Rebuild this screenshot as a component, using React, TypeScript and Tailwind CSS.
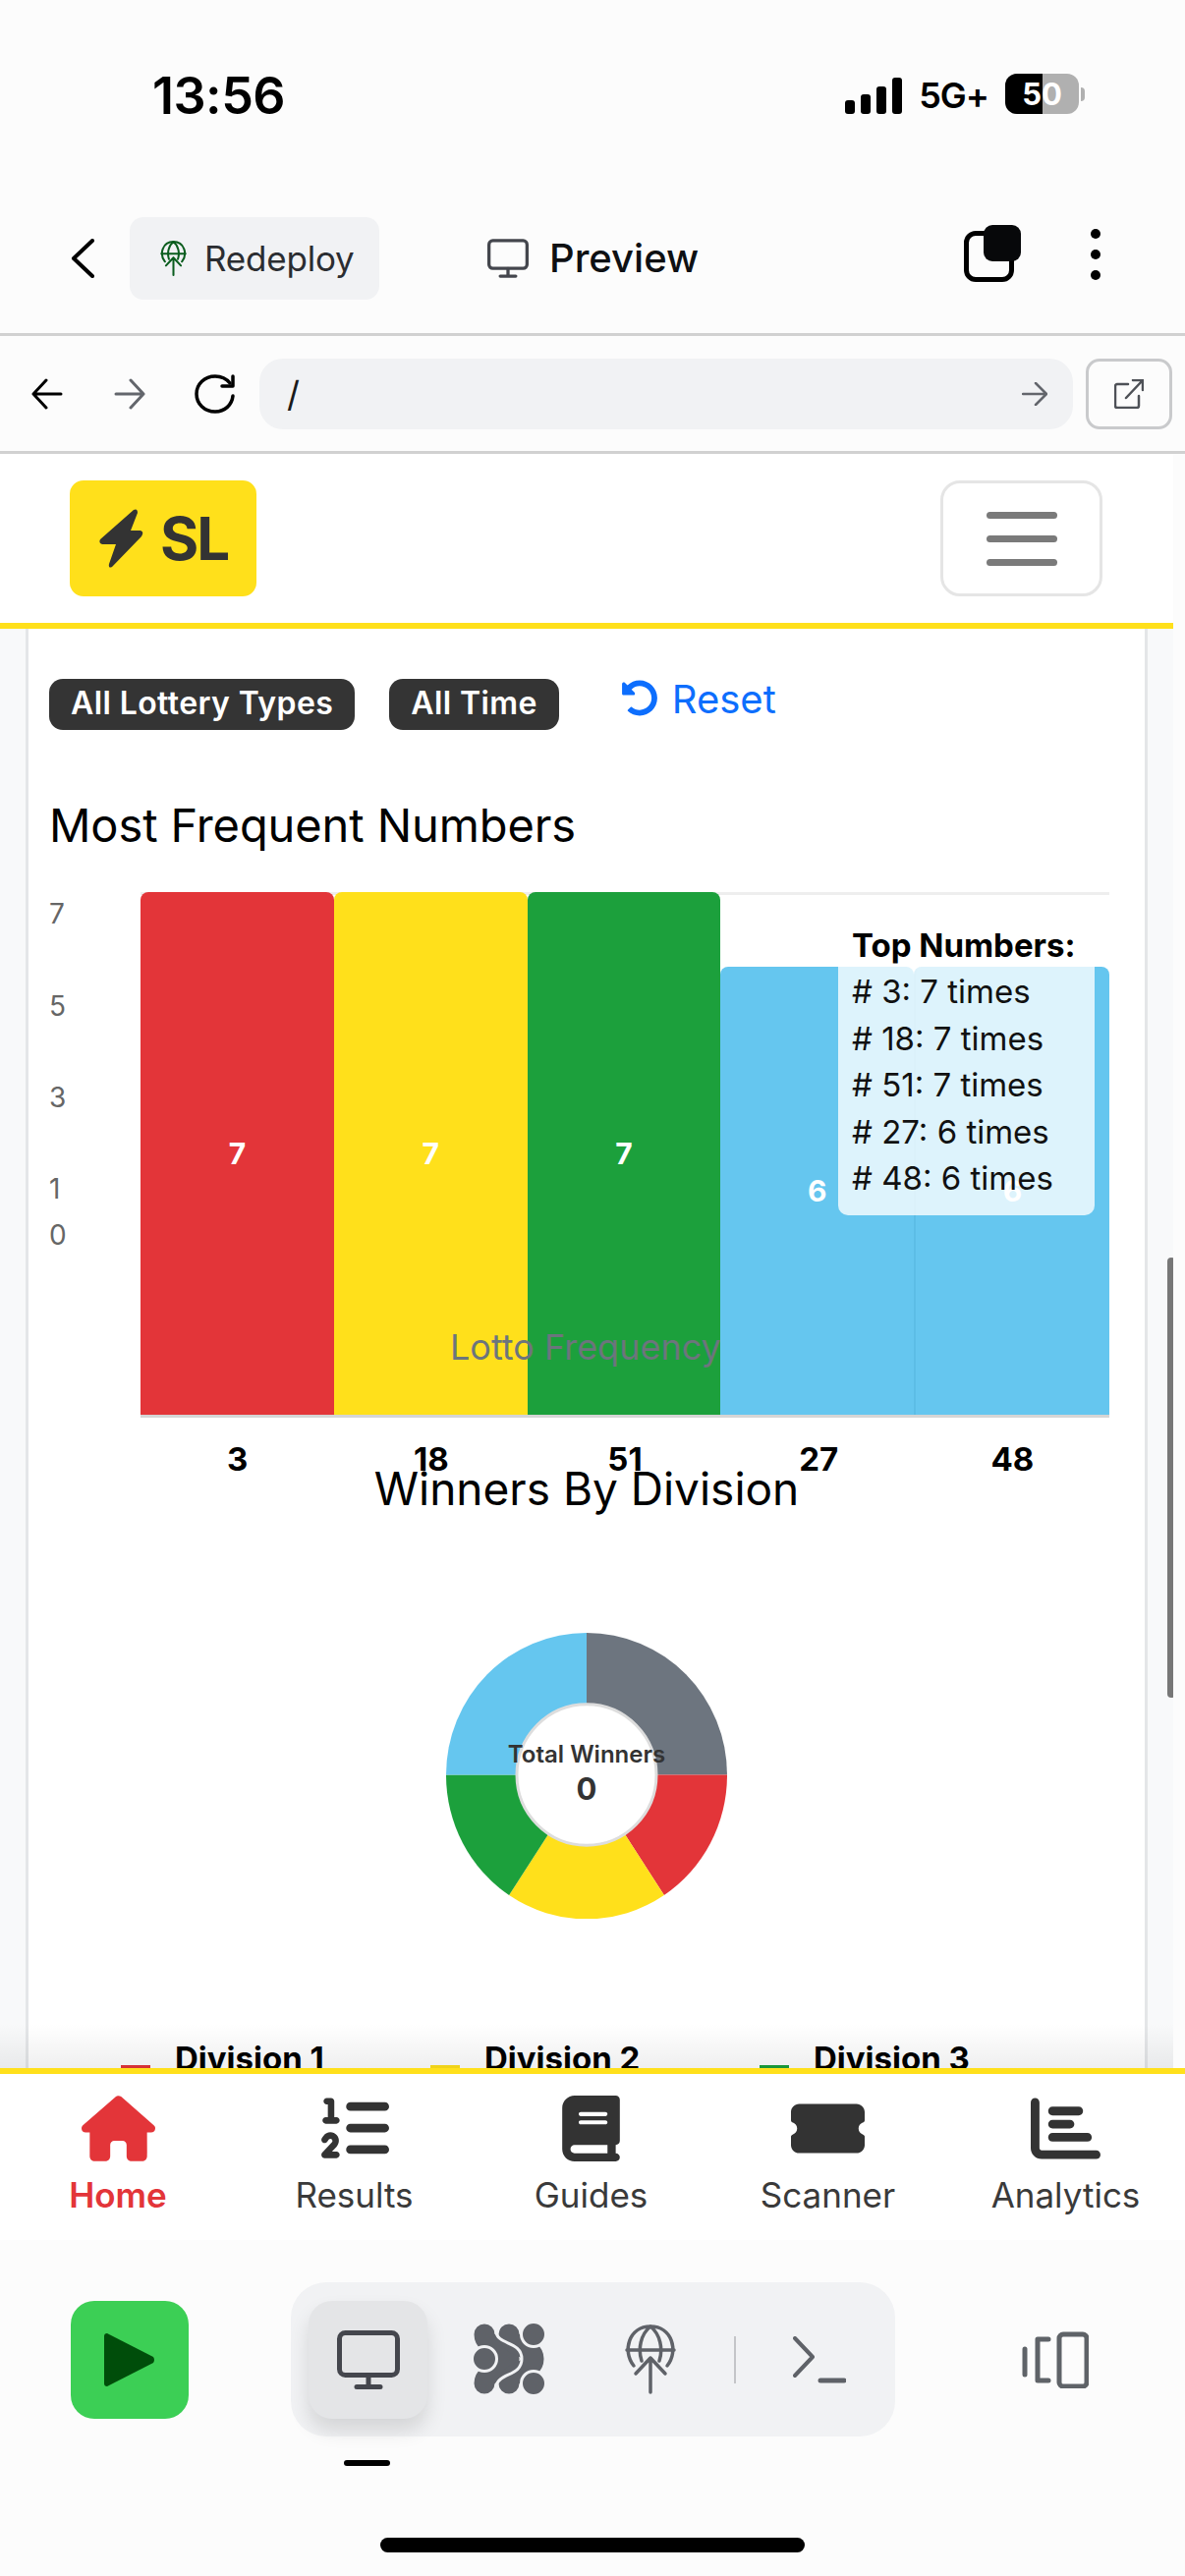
import React from 'react';
import { FaHouse, FaListOl, FaBook, FaTicketSimple, FaChartBar } from 'react-icons/fa6';
import { FaUndoAlt } from 'react-icons/fa';

const DeployIcon = ({ className, sw = 4 }: { className: string; sw?: number }) => (
    <svg viewBox="0 0 52 71" fill="none" stroke="currentColor" strokeWidth={sw} strokeLinecap="round" strokeLinejoin="round" className={className}>
        <path d="M9 42C-3 27 4 2 26 2C48 2 55 27 43 42" />
        <path d="M17 37C13 25 16 10 26 2C36 10 39 25 35 37" />
        <path d="M2 26H50" />
        <path d="M26 69V34M11 50L26 34L41 50" />
    </svg>
);

const MonitorIcon = ({ className, sw = 5 }: { className: string; sw?: number }) => (
    <svg viewBox="0 0 64 60" fill="none" stroke="currentColor" strokeWidth={sw} strokeLinecap="round" className={className}>
        <rect x="2.5" y="2.5" width="59" height="43" rx="6" />
        <path d="M32 46V57M20 57.5H44" />
    </svg>
);

const AgentIcon = ({ className }: { className: string }) => (
    <svg viewBox="0 0 73 73" fill="none" className={className}>
        <g stroke="currentColor" strokeWidth="21" strokeLinecap="round">
            <path d="M11 11C11 25 36 22 36 36C36 50 11 47 11 61" />
            <path d="M36 11C36 25 61 22 61 36C61 50 36 47 36 61" />
        </g>
        <path d="M23 9C25 22 49 18 49 36C49 54 25 50 23 64" stroke="#f1f2f4" strokeWidth="3" />
        <circle cx="11" cy="36" r="12.5" fill="currentColor" stroke="#f1f2f4" strokeWidth="3" />
        <circle cx="61" cy="11" r="12.5" fill="currentColor" stroke="#f1f2f4" strokeWidth="3" />
        <circle cx="61" cy="61" r="12.5" fill="currentColor" stroke="#f1f2f4" strokeWidth="3" />
    </svg>
);

export default function App() {
    return (
        <div className="relative w-[1206px] h-[2622px] overflow-hidden bg-[#fcfcfc] flex flex-col font-['Inter',sans-serif] text-black">
            {/* status bar */}
            <div className="h-[196px] shrink-0 flex justify-between pl-[155px] pr-[102px] pt-[68px]">
                <span className="text-[52px] leading-[60px] font-semibold tracking-[-0.5px]">13:56</span>
                <div className="flex items-start gap-[17px] pt-[9px]">
                    <div className="flex items-end gap-[6px] h-[37px] mt-[2px]">
                        <div className="w-[10px] h-[14px] rounded-[3px] bg-black" />
                        <div className="w-[10px] h-[20px] rounded-[3px] bg-black" />
                        <div className="w-[10px] h-[28px] rounded-[3px] bg-black" />
                        <div className="w-[10px] h-[37px] rounded-[3px] bg-black" />
                    </div>
                    <span className="text-[36px] leading-[40px] font-semibold tracking-[-1px]">5G+</span>
                    <div className="flex items-center gap-[2px] -mt-[2px]">
                        <div className="relative w-[75px] h-[41px] rounded-[12px] overflow-hidden bg-[#b0b0b0] flex">
                            <div className="w-[38px] h-full bg-black" />
                            <span className="absolute inset-0 text-center text-white text-[31px] leading-[41px] font-bold">50</span>
                        </div>
                        <div className="w-[4px] h-[14px] rounded-r-full bg-[#b0b0b0]" />
                    </div>
                </div>
            </div>

            {/* replit toolbar */}
            <div className="h-[146px] shrink-0 flex items-start pt-[25px] relative border-b-[3px] border-[#d1d1d1]">
                <svg viewBox="0 0 24 40" fill="none" stroke="black" strokeWidth="4" strokeLinecap="round" strokeLinejoin="round" className="w-[24px] h-[40px] ml-[72px] mt-[22px]">
                    <path d="M22 2L3 20L22 38" />
                </svg>
                <div className="ml-[36px] w-[254px] h-[84px] rounded-[14px] bg-[#f1f2f4] flex items-center pl-[31px] gap-[18px]">
                    <DeployIcon sw={4} className="w-[27px] h-[36px] text-[#0b5d1e]" />
                    <span className="text-[35px] leading-[44px] text-[#2b2d31] tracking-[-0.2px]">Redeploy</span>
                </div>
                <div className="ml-[110px] flex items-center gap-[21px] h-[84px]">
                    <MonitorIcon sw={5} className="w-[42px] h-[40px] text-[#44464d]" />
                    <span className="text-[40px] leading-[48px] font-medium text-[#0e1013]">Preview</span>
                </div>
                <div className="relative ml-[270px] mt-[8px] w-[58px] h-[58px]">
                    <div className="absolute left-0 bottom-0 w-[51px] h-[52px] rounded-[12px] border-[5px] border-black" />
                    <div className="absolute right-0 top-0 w-[38px] h-[37px] rounded-[9px] bg-[#07080a]" />
                </div>
                <div className="ml-[71px] mt-[12px] flex flex-col gap-[11px]">
                    <div className="w-[10px] h-[10px] rounded-full bg-black" />
                    <div className="w-[10px] h-[10px] rounded-full bg-black" />
                    <div className="w-[10px] h-[10px] rounded-full bg-black" />
                </div>
            </div>

            {/* address bar */}
            <div className="h-[120px] shrink-0 flex items-center border-b-[3px] border-[#d1d1d1]">
                <svg viewBox="0 0 32 32" fill="none" stroke="black" strokeWidth="3" strokeLinecap="round" strokeLinejoin="round" className="w-[32px] h-[32px] ml-[32px]">
                    <path d="M30 16H2M15 2L2 16L15 30" />
                </svg>
                <svg viewBox="0 0 32 32" fill="none" stroke="#63666c" strokeWidth="3" strokeLinecap="round" strokeLinejoin="round" className="w-[32px] h-[32px] ml-[52px]">
                    <path d="M2 16H30M17 2L30 16L17 30" />
                </svg>
                <svg viewBox="0 0 44 40" fill="none" stroke="black" strokeWidth="3.5" strokeLinecap="round" strokeLinejoin="round" className="w-[44px] h-[40px] ml-[49px]">
                    <path d="M37 9C33 4 28 2 22 2C11 2 3 10 3 20C3 30 11 38 22 38C32 38 39 31 40 22" />
                    <path d="M40 2V12H29" />
                </svg>
                <div className="ml-[23px] w-[828px] h-[72px] rounded-[24px] bg-[#f1f2f4] flex items-center justify-between pl-[28px] pr-[26px]">
                    <span className="text-[36px] leading-[44px] text-[#1a1a1a]">/</span>
                    <svg viewBox="0 0 26 24" fill="none" stroke="#63666c" strokeWidth="2.5" strokeLinecap="round" strokeLinejoin="round" className="w-[26px] h-[24px]">
                        <path d="M1 12H25M14 1L25 12L14 23" />
                    </svg>
                </div>
                <div className="ml-[13px] w-[88px] h-[72px] rounded-[14px] border-[3px] border-[#c9cacc] flex items-center justify-center">
                    <svg viewBox="0 0 30 30" fill="none" stroke="#4e5157" strokeWidth="2.5" strokeLinecap="round" strokeLinejoin="round" className="w-[30px] h-[30px]">
                        <path d="M14 5H3A2 2 0 0 0 1 7V27A2 2 0 0 0 3 29H23A2 2 0 0 0 25 27V17" />
                        <path d="M12 19L29 1M19 1H29V11" />
                    </svg>
                </div>
            </div>

            {/* web view */}
            <div className="relative flex-1 min-h-0 overflow-hidden flex flex-col w-[1194px]">
                <div className="shrink-0 h-[178px] bg-white border-b-[6px] border-[#ffe01b] flex items-start justify-between pl-[71px] pr-[72px] pt-[27px]">
                    <div className="w-[190px] h-[118px] rounded-[14px] bg-[#ffe01b] flex items-center pl-[29px] gap-[17px]">
                        <svg viewBox="0 0 46 60" className="w-[46px] h-[60px]" fill="#333333">
                            <path d="M36 1Q40 -1 40 4L33 22L43 22Q47 23 44 28L14 59Q10 61 11 56L18 36L4 36Q0 35 2 31Z" />
                        </svg>
                        <span className="text-[60px] leading-[70px] font-bold text-[#333333] tracking-[-2px]">SL</span>
                    </div>
                    <div className="w-[165px] h-[118px] rounded-[20px] border-[3px] border-[#e5e5e5] flex flex-col items-center justify-center gap-[17px]">
                        <div className="w-[72px] h-[7px] rounded-full bg-[#7a7a7a]" />
                        <div className="w-[72px] h-[7px] rounded-full bg-[#7a7a7a]" />
                        <div className="w-[72px] h-[7px] rounded-full bg-[#7a7a7a]" />
                    </div>
                </div>
                <div className="flex-1 min-h-0 bg-[#f8f9fa] pl-[26px] pr-[26px]">
                    <div className="h-full bg-white border-x-[3px] border-[#e4e6e8] pl-[21px] pt-[51px]">
                        <div className="flex items-start">
                            <span className="h-[52px] px-[22px] rounded-[14px] bg-[#343434] text-white text-[32px] leading-[50px] font-semibold tracking-[0.4px] whitespace-nowrap">All Lottery Types</span>
                            <span className="ml-[35px] h-[52px] px-[22px] rounded-[14px] bg-[#343434] text-white text-[32px] leading-[50px] font-semibold tracking-[0.4px] whitespace-nowrap">All Time</span>
                            <FaUndoAlt className="ml-[63px] mt-[1px] w-[38px] h-[37px] text-[#0d6efd]" />
                            <span className="ml-[14px] -mt-[2px] text-[40px] leading-[46px] text-[#0d6efd]">Reset</span>
                        </div>

                        <h2 className="mt-[70px] text-[47px] leading-[53px] font-normal tracking-[-0.1px]">Most Frequent Numbers</h2>

                        {/* bar chart */}
                        <div className="relative mt-[42px] h-[532px] ml-[93px] w-[986px]">
                            <div className="absolute -left-[93px] top-0 h-full text-[28px] leading-[34px] text-[#666666]">
                                <div className="mt-[5px]">7</div>
                                <div className="mt-[60px]">5</div>
                                <div className="mt-[59px]">3</div>
                                <div className="mt-[59px]">1</div>
                                <div className="mt-[13px]">0</div>
                            </div>
                            <div className="absolute inset-x-0 top-0 h-[3px] bg-[#eeeeee]" />
                            <div className="relative h-full flex items-end">
                                <div className="flex-1 h-full rounded-t-[8px] bg-[#e33539] flex items-center justify-center text-white text-[30px] font-bold">7</div>
                                <div className="flex-1 h-full rounded-t-[8px] bg-[#ffe01b] flex items-center justify-center text-white text-[30px] font-bold">7</div>
                                <div className="flex-1 h-full rounded-t-[8px] bg-[#1ca03c] flex items-center justify-center text-white text-[30px] font-bold">7</div>
                                <div className="flex-1 h-[456px] rounded-t-[8px] bg-[#65c6ef] flex items-center justify-center text-white text-[30px] font-bold">6</div>
                                <div className="flex-1 h-[456px] rounded-t-[8px] bg-[#65c6ef] border-l-2 border-[#5cbde6] flex items-center justify-center text-white text-[30px] font-bold">6</div>
                            </div>
                            <div className="absolute left-0 right-0 -bottom-[3px] h-[3px] bg-[#d5d5d5]" />
                            <div className="absolute left-[315px] top-[443px] text-[36px] leading-[40px] text-[#6c757d] whitespace-nowrap">Lotto Frequency</div>
                            <div className="absolute left-[710px] top-[28px] w-[261px] h-[301px] rounded-[10px] bg-white/78 pl-[14px] pt-[1px] text-[33px] leading-[47.5px] text-[#111111]">
                                <div className="font-bold text-[33px] leading-[50px] -mb-[1px] text-black whitespace-nowrap">Top Numbers:</div>
                                <div># 3: 7 times</div>
                                <div># 18: 7 times</div>
                                <div># 51: 7 times</div>
                                <div># 27: 6 times</div>
                                <div># 48: 6 times</div>
                            </div>
                        </div>
                        <div className="ml-[93px] w-[986px] mt-[25px] flex text-[33px] leading-[40px] font-bold text-black text-center">
                            <div className="flex-1">3</div>
                            <div className="flex-1">18</div>
                            <div className="flex-1">51</div>
                            <div className="flex-1">27</div>
                            <div className="flex-1">48</div>
                        </div>
                        <h2 className="relative -mt-[16px] ml-[-21px] w-[1136px] text-center text-[46px] leading-[53px] font-normal">Winners By Division</h2>

                        {/* donut */}
                        <div className="relative mt-[120px] ml-[404px] w-[286px] h-[291px]">
                            <svg viewBox="0 0 290 292" preserveAspectRatio="none" className="w-full h-full">
                                <path d="M145 145V0A145 145 0 0 1 290 145Z" fill="#6d757f" />
                                <path d="M145 145H290A145 147 0 0 1 225 268Z" fill="#e33539" />
                                <path d="M145 145L225 268A145 147 0 0 1 65 268Z" fill="#ffe01b" />
                                <path d="M145 145L65 268A145 147 0 0 1 0 145Z" fill="#1ca03c" />
                                <path d="M145 145H0A145 145 0 0 1 145 0Z" fill="#65c6ef" />
                                <circle cx="145" cy="145" r="72" fill="white" stroke="#dddddd" strokeWidth="3" />
                            </svg>
                            <div className="absolute left-0 right-0 top-[110px] text-center text-[24px] leading-[28px] font-semibold text-[#333333] whitespace-nowrap">Total Winners</div>
                            <div className="absolute left-0 right-0 top-[140px] text-center text-[31px] leading-[38px] font-bold text-[#333333]">0</div>
                        </div>

                        {/* legend, cut off by the tab bar */}
                        <div className="mt-[124px] flex items-start text-[33px] leading-[36px] font-bold whitespace-nowrap">
                            <div className="ml-[73px] w-[30px] h-[10px] mt-[25px] bg-[#e33539]" />
                            <span className="ml-[25px] w-[260px]">Division 1</span>
                            <div className="w-[30px] h-[10px] mt-[25px] bg-[#ffe01b]" />
                            <span className="ml-[25px] w-[280px]">Division 2</span>
                            <div className="w-[30px] h-[10px] mt-[25px] bg-[#1ca03c]" />
                            <span className="ml-[25px]">Division 3</span>
                        </div>
                    </div>
                </div>
                <div className="absolute left-0 right-0 bottom-0 h-[45px] bg-gradient-to-b from-transparent to-[#00000010]" />
                <div className="absolute right-[-2px] top-[818px] w-[8px] h-[448px] rounded-full bg-[#777777]" />
            </div>

            {/* tab bar */}
            <div className="shrink-0 h-[175px] bg-white border-t-[6px] border-[#ffe01b] flex text-[35px] leading-[40px] text-[#3a3a3a] text-center">
                <div className="w-[240px] flex flex-col items-center pt-[21px]">
                    <div className="h-[68px] flex items-center"><FaHouse className="w-[75px] h-[67px] text-[#e33539]" /></div>
                    <span className="mt-[14px] font-semibold text-[#e33539]">Home</span>
                </div>
                <div className="w-[241px] flex flex-col items-center pt-[21px]">
                    <div className="h-[68px] flex items-center"><FaListOl className="w-[70px] h-[70px] text-[#333333]" /></div>
                    <span className="mt-[14px]">Results</span>
                </div>
                <div className="w-[241px] flex flex-col items-center pt-[21px]">
                    <div className="h-[68px] flex items-center"><FaBook className="w-[59px] h-[67px] text-[#333333]" /></div>
                    <span className="mt-[14px]">Guides</span>
                </div>
                <div className="w-[241px] flex flex-col items-center pt-[21px]">
                    <div className="h-[68px] flex items-center"><FaTicketSimple className="w-[75px] h-[67px] text-[#333333]" /></div>
                    <span className="mt-[14px]">Scanner</span>
                </div>
                <div className="w-[243px] flex flex-col items-center pt-[21px]">
                    <div className="h-[68px] flex items-center"><FaChartBar className="w-[71px] h-[71px] text-[#333333]" /></div>
                    <span className="mt-[14px]">Analytics</span>
                </div>
            </div>

            {/* replit bottom toolbar */}
            <div className="h-[342px] shrink-0 flex items-start pt-[43px] pl-[72px]">
                <div className="mt-[19px] w-[120px] h-[120px] rounded-[24px] bg-[#3ccf55] flex items-center justify-center">
                    <svg viewBox="0 0 52 58" className="w-[52px] h-[58px]">
                        <path d="M3 2L50 26Q52 29 50 32L3 56Q0 56 0 53V5Q0 2 3 2Z" fill="#004d0a" />
                    </svg>
                </div>
                <div className="relative ml-[104px] w-[615px] h-[157px] rounded-[36px] bg-[#f1f2f4] flex items-center pl-[18px]">
                    <div className="w-[121px] h-[120px] rounded-[24px] bg-[#e4e5e7] shadow-[0_12px_20px_rgba(0,0,0,0.12)] flex items-center justify-center">
                        <MonitorIcon sw={5} className="w-[64px] h-[60px] text-[#44464d]" />
                    </div>
                    <AgentIcon className="ml-[47px] w-[73px] h-[73px] text-[#5f6268]" />
                    <DeployIcon sw={3.5} className="ml-[81px] w-[52px] h-[71px] text-[#5f6268]" />
                    <div className="ml-[59px] w-[2px] h-[48px] bg-[#c4c5c8]" />
                    <svg viewBox="0 0 54 48" fill="none" stroke="#5f6268" strokeWidth="4" strokeLinecap="round" strokeLinejoin="round" className="ml-[58px] w-[54px] h-[48px]">
                        <path d="M2 2L20 21L2 40" />
                        <path d="M28 45H52" strokeWidth="5" />
                    </svg>
                    <div className="absolute left-[54px] top-[181px] w-[47px] h-[6px] rounded-full bg-black" />
                </div>
                <svg viewBox="0 0 68 58" fill="none" stroke="#5f6368" strokeWidth="5" strokeLinecap="round" strokeLinejoin="round" className="ml-[129px] mt-[50px] w-[68px] h-[58px]">
                    <path d="M3 18V44" />
                    <path d="M27 8H16V50H27" />
                    <rect x="38" y="3" width="28" height="53" rx="4" />
                </svg>
            </div>

            <div className="absolute left-[387px] top-[2583px] w-[432px] h-[15px] rounded-full bg-black" />
        </div>
    );
}
